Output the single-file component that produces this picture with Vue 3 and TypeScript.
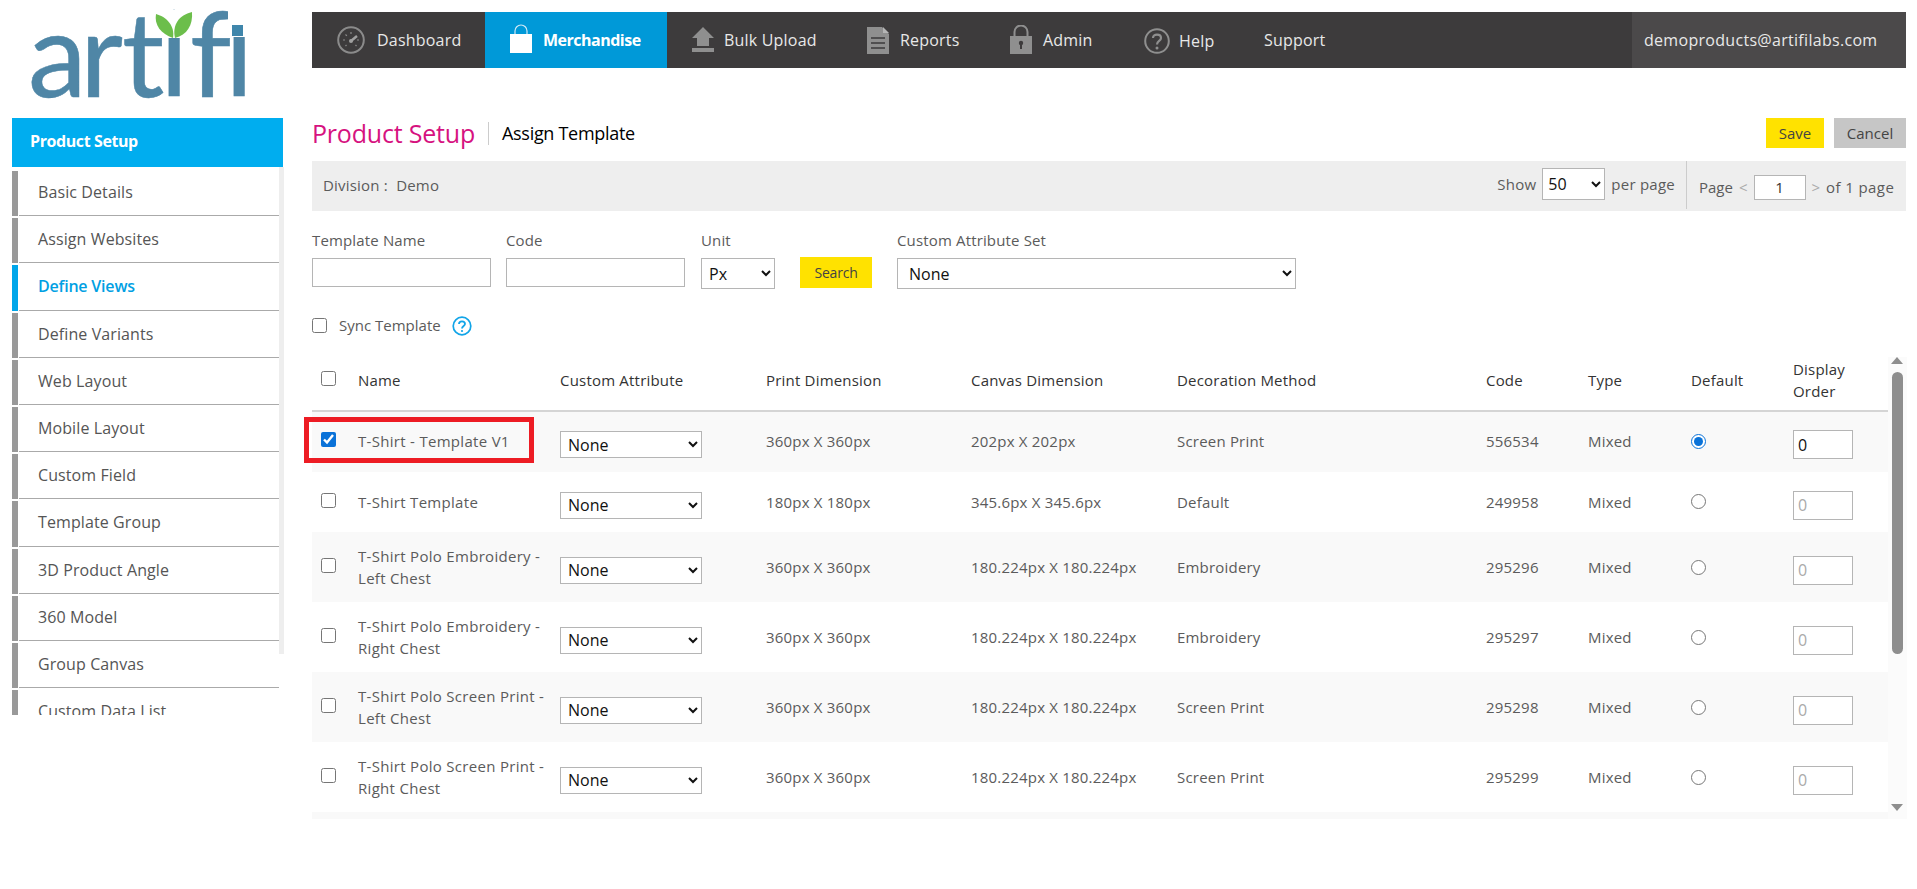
<script setup lang="ts">
const menu: string[] = ['Basic Details', 'Assign Websites', 'Define Views', 'Define Variants', 'Web Layout', 'Mobile Layout', 'Custom Field', 'Template Group', '3D Product Angle', '360 Model', 'Group Canvas', 'Custom Data List']
interface Row { name: string; print: string; canvas: string; method: string; code: string; on: boolean }
const rows: Row[] = [
  { name: 'T-Shirt - Template V1', print: '360px X 360px', canvas: '202px X 202px', method: 'Screen Print', code: '556534', on: true },
  { name: 'T-Shirt Template', print: '180px X 180px', canvas: '345.6px X 345.6px', method: 'Default', code: '249958', on: false },
  { name: 'T-Shirt Polo Embroidery - Left Chest', print: '360px X 360px', canvas: '180.224px X 180.224px', method: 'Embroidery', code: '295296', on: false },
  { name: 'T-Shirt Polo Embroidery - Right Chest', print: '360px X 360px', canvas: '180.224px X 180.224px', method: 'Embroidery', code: '295297', on: false },
  { name: 'T-Shirt Polo Screen Print - Left Chest', print: '360px X 360px', canvas: '180.224px X 180.224px', method: 'Screen Print', code: '295298', on: false },
  { name: 'T-Shirt Polo Screen Print - Right Chest', print: '360px X 360px', canvas: '180.224px X 180.224px', method: 'Screen Print', code: '295299', on: false },
]
</script>

<template>
  <div class="page">
    <aside class="side">
      <div class="logo">
        <svg width="284" height="118" viewBox="0 0 284 118">
          <text x="28 80 122 160 190 225" y="97" class="logo-text">artifi</text>
          <rect x="228" y="8" width="22" height="29" fill="#fff" />
          <rect x="232" y="25" width="11" height="11" fill="#3f86ab" />
          <rect x="164" y="10" width="18" height="28" fill="#fff" />
          <path d="M173 38 C161 34 154 25 156 14 C167 17 175 26 173 38 Z" fill="#6cbe4b" />
          <path d="M175 38 C172 25 179 15 192 12 C193 25 187 35 175 38 Z" fill="#6cbe4b" />
        </svg>
      </div>
      <div class="side-head">Product Setup</div>
      <div class="side-body">
        <ul class="side-list">
          <li v-for="m in menu" :key="m" class="side-item" :class="{ active: m === 'Define Views' }"><span>{{ m }}</span></li>
        </ul>
        <div class="side-bar"></div>
      </div>
    </aside>

    <main class="main">
      <nav class="nav">
        <a class="nav-item first">
          <svg width="28" height="28" viewBox="0 0 28 28" fill="none" stroke="#8b8b8b"><circle cx="14" cy="14" r="12.8" stroke-width="2" /><path d="M14 15 L20 10" stroke-width="2.4" stroke="#a0a0a0" /><circle cx="14" cy="15" r="2" fill="#a0a0a0" stroke="none" /><path d="M6 14h2M14 6v2M8.5 8.5l1.4 1.4M19.5 20l-1-1M8.5 20l1-1M20 14h2" stroke-width="1.2" /></svg>
          <span>Dashboard</span>
        </a>
        <a class="nav-item merch">
          <svg width="22" height="30" viewBox="0 0 22 30"><path d="M5 10 V7 a6 6 0 0 1 12 0 V10" fill="none" stroke="#cfe8f5" stroke-width="1.2" /><rect y="10" width="22" height="19" fill="#fff" /></svg>
          <span>Merchandise</span>
        </a>
        <a class="nav-item up">
          <svg width="22" height="26" viewBox="0 0 22 26" fill="#8f8f8f"><path d="M11 0 L22 11 H17 V19 H5 V11 H0 Z" /><rect y="21" width="22" height="4" /></svg>
          <span>Bulk Upload</span>
        </a>
        <a class="nav-item rep">
          <svg width="22" height="27" viewBox="0 0 22 27"><path d="M0 0 H15 L22 7 V27 H0 Z" fill="#8f8f8f" /><path d="M16 0 L22 6 H16 Z" fill="#b5b5b5" /><path d="M4 11 H18 M4 16 H18 M4 21 H18" stroke="#3d3b3c" stroke-width="1.6" /></svg>
          <span>Reports</span>
        </a>
        <a class="nav-item lock">
          <svg width="22" height="30" viewBox="0 0 22 30"><path d="M4.5 12 V7 a6.5 6.5 0 0 1 13 0 V12" fill="none" stroke="#8f8f8f" stroke-width="2" /><rect y="11" width="22" height="18" fill="#8f8f8f" /><circle cx="11" cy="18" r="2.2" fill="#3d3b3c" /><rect x="10" y="18" width="2" height="6" fill="#3d3b3c" /></svg>
          <span>Admin</span>
        </a>
        <a class="nav-item help">
          <svg width="26" height="26" viewBox="0 0 26 26" fill="none" stroke="#8f8f8f"><circle cx="13" cy="13" r="11.8" stroke-width="2" /><path d="M9 10 C9 5.5 17 5.5 17 10 C17 13 13 13 13 16.5" stroke-width="2.2" /><circle cx="13" cy="20" r="1.5" fill="#8f8f8f" stroke="none" /></svg>
          <span>Help</span>
        </a>
        <a class="nav-item sup"><span>Support</span></a>
        <div class="nav-user">demoproducts@artifilabs.com</div>
      </nav>

      <div class="title-row">
        <h1 class="title">Product Setup</h1>
        <h2 class="sub">Assign Template</h2>
        <div class="actions">
          <button class="btn yellow save">Save</button>
          <button class="btn gray">Cancel</button>
        </div>
      </div>

      <div class="toolbar">
        <div class="division">Division :&nbsp; Demo</div>
        <div class="per">
          <span>Show</span>
          <select class="sel sel-50"><option>50</option></select>
          <span>per page</span>
        </div>
        <div class="pager">
          <span>Page</span><span class="chev">&lt;</span>
          <input class="page-in" value="1" />
          <span class="chev">&gt;</span><span class="of">of 1 page</span>
        </div>
      </div>

      <div class="filters">
        <label class="f f-name">Template Name<input class="txt" /></label>
        <label class="f f-code">Code<input class="txt" /></label>
        <label class="f f-unit">Unit<select class="sel"><option>Px</option></select></label>
        <button class="btn yellow search">Search</button>
        <label class="f f-set">Custom Attribute Set<select class="sel"><option>None</option></select></label>
      </div>

      <div class="sync">
        <input type="checkbox" class="cb" />
        <span class="sync-l">Sync Template</span>
        <svg class="sync-i" width="20" height="20" viewBox="0 0 20 20" fill="none" stroke="#12a5e8"><circle cx="10" cy="10" r="8.8" stroke-width="1.7" /><path d="M7 8 C7 4.5 13 4.5 13 8 C13 10 10 10 10 12.5" stroke-width="1.8" /><circle cx="10" cy="15" r="1.1" fill="#12a5e8" stroke="none" /></svg>
      </div>

      <div class="grid-box">
        <div class="grid-scroll">
          <table class="grid">
            <colgroup>
              <col class="w0" /><col class="w1" /><col class="w2" /><col class="w3" /><col class="w2" /><col class="w5" /><col class="w6" /><col class="w7" /><col class="w6" /><col class="w9" />
            </colgroup>
            <thead>
              <tr>
                <th class="c0"><input type="checkbox" class="cb" /></th>
                <th>Name</th><th>Custom Attribute</th><th>Print Dimension</th><th>Canvas Dimension</th><th>Decoration Method</th><th>Code</th><th>Type</th><th>Default</th><th>Display<br />Order</th>
              </tr>
            </thead>
            <tbody>
              <tr v-for="(r, i) in rows" :key="r.code" :class="{ flat: i < 2 }">
                <td class="c0"><input type="checkbox" class="cb" :checked="r.on" /></td>
                <td class="nm">{{ r.name }}</td>
                <td><select class="sel sel-attr"><option>None</option></select></td>
                <td>{{ r.print }}</td>
                <td>{{ r.canvas }}</td>
                <td>{{ r.method }}</td>
                <td>{{ r.code }}</td>
                <td>Mixed</td>
                <td><input type="radio" class="rd" name="def" :checked="r.on" /></td>
                <td><input class="ord" :class="{ off: !r.on }" value="0" /></td>
              </tr>
            </tbody>
          </table>
        </div>
        <div class="mark"></div>
        <div class="track">
          <i class="arr arr-up"></i>
          <div class="thumb"></div>
          <i class="arr arr-down"></i>
        </div>
      </div>
    </main>
  </div>
</template>

<style>
html, body { margin: 0; background: #fff; overflow: hidden; }
</style>

<style scoped>
.page { display: flex; width: 1917px; height: 889px; padding-left: 12px; box-sizing: border-box; font-family: "Open Sans", "Noto Sans", sans-serif; font-size: 15px; color: #5b5b5b; }
.side { width: 272px; margin-right: 28px; flex: none; }
.logo { height: 118px; margin-left: -12px; width: 284px; }
.logo-text { font-family: "Lato", sans-serif; font-size: 118px; fill: #4f86a6; stroke: #4f86a6; stroke-width: 0.5px; font-variant-ligatures: none; }
.side-head { background: #00adef; color: #fff; font-weight: 700; font-size: 16px; height: 49px; line-height: 47px; padding-left: 18px; width: 253px; letter-spacing: -0.4px; }
.side-body { display: flex; align-items: flex-start; height: 548px; overflow: hidden; }
.side-list { list-style: none; margin: 4px 0 0; padding: 0; width: 267px; flex: none; }
.side-item { height: 45.2px; margin-bottom: 2px; border-left: 6px solid #999; }
.side-item span { display: block; box-sizing: border-box; margin-left: 1px; height: 45.2px; line-height: 42px; padding-left: 19px; border-bottom: 1px solid #aaa; font-size: 16px; color: #555; letter-spacing: 0.1px; }
.side-item.active { border-left-color: #00a6ea; }
.side-item.active span { color: #00a0e3; font-weight: 600; letter-spacing: -0.2px; }
.side-bar { width: 5px; height: 487px; background: #eee; flex: none; }

.main { width: 1594px; flex: none; }
.nav { display: flex; align-items: center; height: 56px; margin-top: 12px; background: #3d3b3c; color: #e8e8e8; font-size: 16px; letter-spacing: 0.2px; }
.nav-item { display: flex; align-items: center; height: 100%; box-sizing: border-box; flex: none; }
.nav-item.first { width: 173px; padding-left: 25px; gap: 12px; }
.nav-item.merch { width: 182px; padding-left: 25px; gap: 11px; background: #0099d8; color: #fff; font-weight: 700; letter-spacing: -0.5px; }
.nav-item.merch svg { margin-top: -3px; }
.nav-item.up { padding-left: 25px; gap: 10px; width: 200px; }
.nav-item.rep { gap: 11px; width: 143px; }
.nav-item.lock { gap: 11px; width: 134px; }
.nav-item.help { gap: 9px; width: 120px; padding-top: 2px; }
.nav-user { margin-left: auto; padding-left: 12px; background: #4b494a; height: 100%; display: flex; align-items: center; box-sizing: border-box; width: 274px; letter-spacing: 0.3px; }

.title-row { display: flex; align-items: center; height: 30px; margin-top: 50px; }
.title { margin: 0; font-size: 25px; font-weight: 400; color: #d6127f; line-height: 30px; letter-spacing: -0.2px; padding-right: 13px; border-right: 1px solid #ccc; height: 23px; display: flex; align-items: center; }
.sub { margin: 0 0 0 13px; font-size: 18px; font-weight: 400; color: #000; letter-spacing: -0.3px; }
.actions { margin-left: auto; display: flex; gap: 10px; }
.btn { border: 0; height: 30px; padding: 0; font: inherit; color: #444; flex: none; }
.yellow { background: #ffe200; }
.gray { background: #c6c6c6; width: 72px; }
.save { width: 58px; }

.toolbar { display: flex; align-items: stretch; height: 50px; margin-top: 13px; background: #eee; }
.division { align-self: center; padding-left: 11px; margin-bottom: 2px; letter-spacing: 0.2px; }
.per { margin-left: auto; display: flex; align-items: center; gap: 6px; padding-right: 11px; height: 46px; letter-spacing: 0.25px; }
.pager { display: flex; align-items: center; width: 220px; height: 48px; border-left: 1px solid #ccc; padding: 4px 0 0 12px; box-sizing: border-box; }
.chev { color: #aaa; margin: 0 6px; }
.of { letter-spacing: 0.4px; }
.page-in { width: 52px; height: 25px; box-sizing: border-box; border: 1px solid #b5b5b5; text-align: center; font: inherit; color: #333; padding: 0; }

.sel { box-sizing: border-box; background: #fff; border: 1px solid #b5b5b5; font-family: "Open Sans", sans-serif; font-size: 16px; color: #111; padding-left: 3px; letter-spacing: 0; }
.sel-50 { width: 63px; height: 32px; padding-left: 1px; }
.filters { display: flex; align-items: flex-start; margin-top: 18px; height: 60px; }
.f { display: flex; flex-direction: column; justify-content: space-between; height: 58px; box-sizing: border-box; padding-top: 1px; letter-spacing: 0.15px; }
.f-name { width: 179px; margin-right: 15px; }
.f-code { width: 179px; margin-right: 16px; }
.f-unit { width: 74px; margin-right: 25px; height: 60px; }
.f-set { width: 399px; margin-left: 25px; height: 60px; }
.f-set .sel { padding-left: 7px; }
.f .sel { height: 31px; width: 100%; }
.txt { box-sizing: border-box; height: 29px; width: 100%; border: 1px solid #b5b5b5; background: #fff; }
.search { width: 72px; height: 31px; margin-top: 28px; font-size: 14px; letter-spacing: -0.2px; }

.sync { display: flex; align-items: center; height: 20px; margin-top: 26px; }
.cb { width: 15px; height: 15px; margin: 0; accent-color: #0a72d8; }
.sync-l { margin-left: 12px; margin-right: 11px; }
.sync-i { margin-top: 1px; }
.grid-box { position: relative; display: flex; height: 462px; margin-top: 22px; width: 1595px; }
.grid-scroll { width: 1576px; height: 462px; overflow: hidden; flex: none; background: #f9f9f9; }
.w0 { width: 46px; }
.w1 { width: 202px; }
.w2 { width: 206px; }
.w3 { width: 205px; }
.w5 { width: 309px; }
.w6 { width: 102px; }
.w7 { width: 103px; }
.w9 { width: 95px; }
.grid { width: 1576px; table-layout: fixed; border-collapse: collapse; background: #fff; letter-spacing: 0.2px; }
.grid th { height: 54px; box-sizing: border-box; padding: 0 0 8px; font-weight: 400; color: #333; text-align: left; line-height: 22px; border-bottom: 2px solid #d5d5d5; vertical-align: middle; }
.grid td { box-sizing: border-box; padding: 0; height: 70px; line-height: 22px; vertical-align: middle; }
.grid tbody tr.flat td { height: 60px; padding-bottom: 1px; }
.grid tbody tr.flat:first-child td { height: 61px; padding-bottom: 2px; }
.grid tbody tr:nth-child(odd) td { background: #f9f9f9; }
.grid .c0 { padding-left: 9px; }
.grid .nm { padding-right: 8px; letter-spacing: 0.3px; }
.sel-attr { width: 142px; height: 27px; margin-top: 6px; display: block; }
.rd { width: 15px; height: 15px; margin: 0; accent-color: #0a72d8; display: block; }
.ord { display: block; box-sizing: border-box; width: 60px; height: 29px; border: 1px solid #b5b5b5; margin-top: 6px; padding: 0 0 0 4px; font: inherit; font-size: 16px; color: #111; background: #fff; }
.flat .sel-attr, .flat .ord { margin-top: 7px; }
.ord.off { color: #aaa; }
.mark { position: absolute; left: -8px; top: 60px; width: 230px; height: 46px; box-sizing: border-box; border: 5px solid #ed1c24; }
.track { position: relative; width: 19px; height: 462px; background: #fbfbfb; flex: none; }
.thumb { position: absolute; left: 4px; top: 15px; width: 11px; height: 282px; border-radius: 6px; background: #8e8e8e; }
.arr { position: absolute; left: 3px; width: 0; height: 0; border-left: 6.5px solid transparent; border-right: 6.5px solid transparent; }
.arr-up { top: 0; border-bottom: 7px solid #8e8e8e; }
.arr-down { bottom: 8px; border-top: 7px solid #8e8e8e; }
</style>
